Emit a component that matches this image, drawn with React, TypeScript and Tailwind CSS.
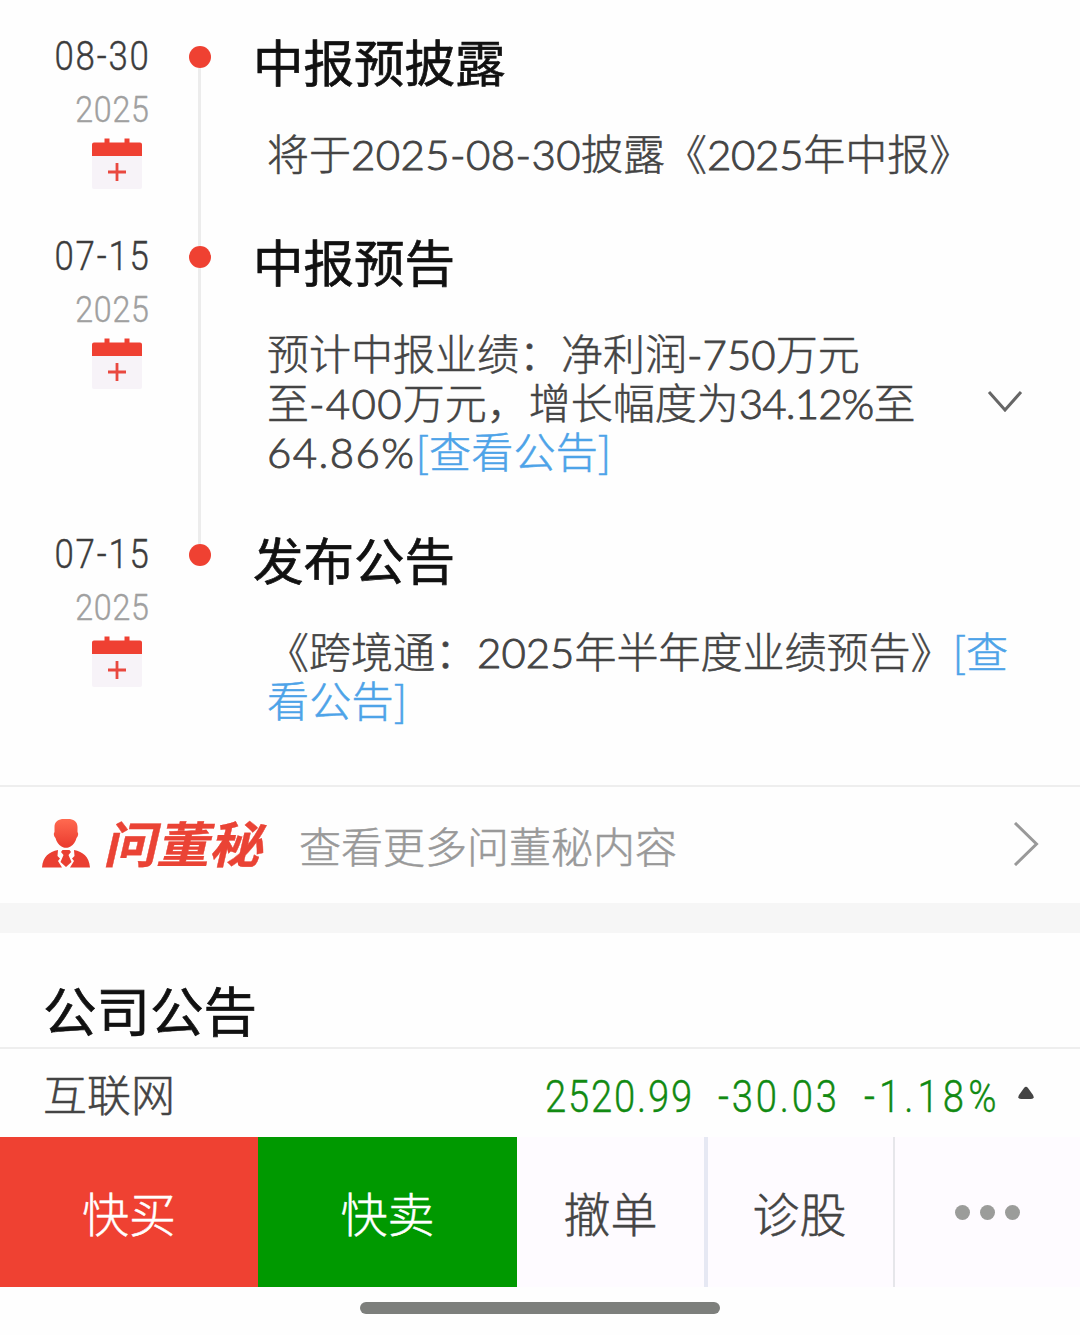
import React from 'react';
import clsx from 'clsx';

interface TimelineItem {
  date: string;
  year: string;
  title: string;
  height: string;
  content: React.ReactNode;
  expandable?: boolean;
}

const Num = ({ children, className }: { children: React.ReactNode; className?: string }) => (
  <span className={clsx("font-['Lato','Liberation_Sans',sans-serif] leading-[0] font-light [-webkit-text-stroke:0.9px_currentColor]", className)}>
    {children}
  </span>
);

const Link = ({ children }: { children: React.ReactNode }) => (
  <span className="tracking-[0.3px] text-[#4da3e8] [-webkit-text-stroke:0.5px_currentColor]">{children}</span>
);

const CalendarIcon = () => (
  <svg className="h-[52px] w-[54px]" viewBox="0 0 54 52">
    <path d="M2 16h50v33a2 2 0 0 1-2 2H4a2 2 0 0 1-2-2z" fill="#f7f3f8" />
    <path d="M4 4.500h10.500V0.500h5v4h15v-4h5v4H50a2 2 0 0 1 2 2V18H2V6.500a2 2 0 0 1 2-2z" fill="#ef4032" />
    <path d="M18 34h18M27 25v18" stroke="#e9483f" strokeWidth="2.800" />
  </svg>
);

const SecretaryIcon = () => (
  <svg className="mt-[-2px] h-[50px] w-[50px]" viewBox="0 0 50 50">
    <defs>
      <linearGradient id="secretary" x1="0" y1="0" x2="0" y2="1">
        <stop offset="0" stopColor="#ff6a50" />
        <stop offset="1" stopColor="#ea3a2e" />
      </linearGradient>
    </defs>
    <path
      d="M21 0h8c5 1 7.500 3.500 7.500 8v5c1.200 1 .8 4.500-1 6-1 4-3 6.500-6 8.500-2.500 1.800-6.500 1.800-9 0-3-2-5-4.500-6-8.500-1.800-1.500-2.200-5-1-6V8c0-4.500 2.500-7 7.500-8z"
      fill="url(#secretary)"
    />
    <path d="M17 31C8 33 2 37 1 48.500h20L17 42l2-2.500-2.500-2.500zM33 31c9 2 15 6 16 17.500H29l4-6.500-2-2.500 2.500-2.500z" fill="#ea3f32" />
    <path d="M21.500 31h7l1.500 2-2.500 3 3 7-5.500 5-5.500-5 3-7-2.500-3z" fill="#ea3f32" />
  </svg>
);

const items: TimelineItem[] = [
  {
    date: '08-30',
    year: '2025',
    title: '中报预披露',
    height: 'h-[200px]',
    content: (
      <>
        将于<Num className="tracking-[0.4px]">2025-08-30</Num>披露《<Num className="tracking-[-0.3px]">2025</Num>年中报》
      </>
    ),
  },
  {
    date: '07-15',
    year: '2025',
    title: '中报预告',
    height: 'h-[298px]',
    expandable: true,
    content: (
      <>
        预计中报业绩：净利润<Num>-750</Num>万元
        <br />至<Num className="tracking-[1.3px]">-400</Num>万元，增长幅度为<Num className="tracking-[-0.9px]">34.12%</Num>至
        <br />
        <Num className="tracking-[1.4px]">64.86%</Num>
        <Link>[查看公告]</Link>
      </>
    ),
  },
  {
    date: '07-15',
    year: '2025',
    title: '发布公告',
    height: 'h-[239px]',
    content: (
      <>
        《跨境通：<Num>2025</Num>年半年度业绩预告》<Link>[查</Link>
        <br />
        <Link>看公告]</Link>
      </>
    ),
  },
];

const TimelineRow = ({ item, last }: { item: TimelineItem; last: boolean }) => (
  <div className={clsx('flex', item.height)}>
    <div className="flex w-[150px] flex-col items-end font-['Roboto',sans-serif] font-light [-webkit-text-stroke:0.4px_currentColor]">
      <div className="mr-[-1px] origin-right scale-x-[0.87] text-[40px] leading-[22px] tracking-[2.1px] text-[#3c3c3c]">{item.date}</div>
      <div className="mt-[31px] origin-right scale-x-[0.87] text-[37px] leading-[22px] tracking-[0.9px] text-[#a0a0a0]">{item.year}</div>
      <div className="mt-[17px] mr-[6px] h-[52px]">
        <CalendarIcon />
      </div>
    </div>
    <div className="ml-[38px] flex w-[23px] flex-col items-center">
      <div className="size-[22px] shrink-0 rounded-full bg-[#ef4132]" />
      {!last && <div className="w-[3px] flex-1 bg-[#ececec]" />}
    </div>
    <div className="mt-[-2px] ml-[42px] flex-1">
      <h2 className="text-[50.5px] leading-[32px] font-normal text-[#111] [-webkit-text-stroke:0.7px_#111]">{item.title}</h2>
      <div className="mt-[51px] ml-[14px] flex items-center">
        <p className="w-[720px] text-[42px] leading-[49px] font-light whitespace-nowrap text-[#444] [-webkit-text-stroke:0.5px_currentColor]">
          {item.content}
        </p>
        {item.expandable && (
          <svg className="mt-[2px] h-6 w-9" viewBox="0 0 36 24" fill="none" stroke="#666" strokeWidth="3">
            <path d="M2 2l16 18L34 2" />
          </svg>
        )}
      </div>
    </div>
  </div>
);

const App: React.FC = () => {
  return (
    <div className="h-[1335px] w-[1080px] overflow-hidden bg-[#fefefe] font-['Noto_Sans_CJK_SC',sans-serif]">
      <section className="h-[785px] pt-[46px]">
        {items.map((item, i) => (
          <TimelineRow key={i} item={item} last={i === items.length - 1} />
        ))}
      </section>

      <section className="flex h-[118px] items-center border-t-2 border-[#eee] pr-[41px] pl-[41px]">
        <SecretaryIcon />
        <span className="mt-[-6px] ml-[17px] inline-block w-[191px] -skew-x-12 scale-y-[0.93] text-[53px] leading-[60px] font-bold text-[#ea4335] [-webkit-text-stroke:0.4px_#ea4335]">问董秘</span>
        <span className="text-[42px] leading-[60px] font-light text-[#999] [-webkit-text-stroke:0.5px_currentColor]">查看更多问董秘内容</span>
        <svg className="mt-[-2px] ml-auto h-[44px] w-[26px]" viewBox="0 0 26 44" fill="none" stroke="#999" strokeWidth="3">
          <path d="M2 1l21.500 21L2 43" />
        </svg>
      </section>
      <div className="h-[30px] bg-[#f6f6f6]" />

      <section className="flex h-[114px] items-center pt-[38px] pl-[43px]">
        <h1 className="text-[53.500px] leading-[60px] font-normal text-[#111] [-webkit-text-stroke:0.7px_#111]">公司公告</h1>
      </section>

      <section className="flex h-[90px] items-center border-t-2 border-[#eee] pr-[46px] pl-[43px]">
        <span className="text-[44px] leading-[60px] font-light text-[#444] [-webkit-text-stroke:0.5px_currentColor]">互联网</span>
        <div className="mt-[8px] ml-auto flex w-[452px] justify-between font-['Roboto',sans-serif] text-[45px] leading-[60px] font-light text-[#128a12] [-webkit-text-stroke:0.4px_currentColor]">
          <span className="w-[147px] origin-left scale-x-[0.85] tracking-[2.1px]">2520.99</span>
          <span className="w-[120px] origin-left scale-x-[0.85] tracking-[3.300px]">-30.03</span>
          <span className="w-[133px] origin-left scale-x-[0.85] tracking-[4.800px]">-1.18%</span>
        </div>
        <svg className="ml-[21px] h-[14px] w-4" viewBox="0 0 16 14">
          <path d="M6 2q2-2.500 4 0l5 7q2 4-2 4H3q-4 0-2-4z" fill="#444" />
        </svg>
      </section>

      <nav className="flex h-[150px] bg-[#fefbff] text-[47px] font-light text-[#444] [-webkit-text-stroke:0.5px_currentColor]">
        <button className="w-[258px] bg-[#ef4132] text-white">快买</button>
        <button className="w-[259px] bg-[#009900] text-white">快卖</button>
        <button className="w-[191px] border-r-[4px] border-[#e6e8f3]">撤单</button>
        <button className="w-[187px] border-r-2 border-[#e6e6ea] pr-[2px]">诊股</button>
        <button className="flex flex-1 items-center justify-center gap-[10px]">
          <span className="size-[15px] rounded-full bg-[#9b9c9a]" />
          <span className="size-[15px] rounded-full bg-[#9b9c9a]" />
          <span className="size-[15px] rounded-full bg-[#9b9c9a]" />
        </button>
      </nav>

      <div className="mx-auto mt-[15px] h-3 w-[360px] rounded-full bg-[#7d7f7c]" />
    </div>
  );
};

export default App;
